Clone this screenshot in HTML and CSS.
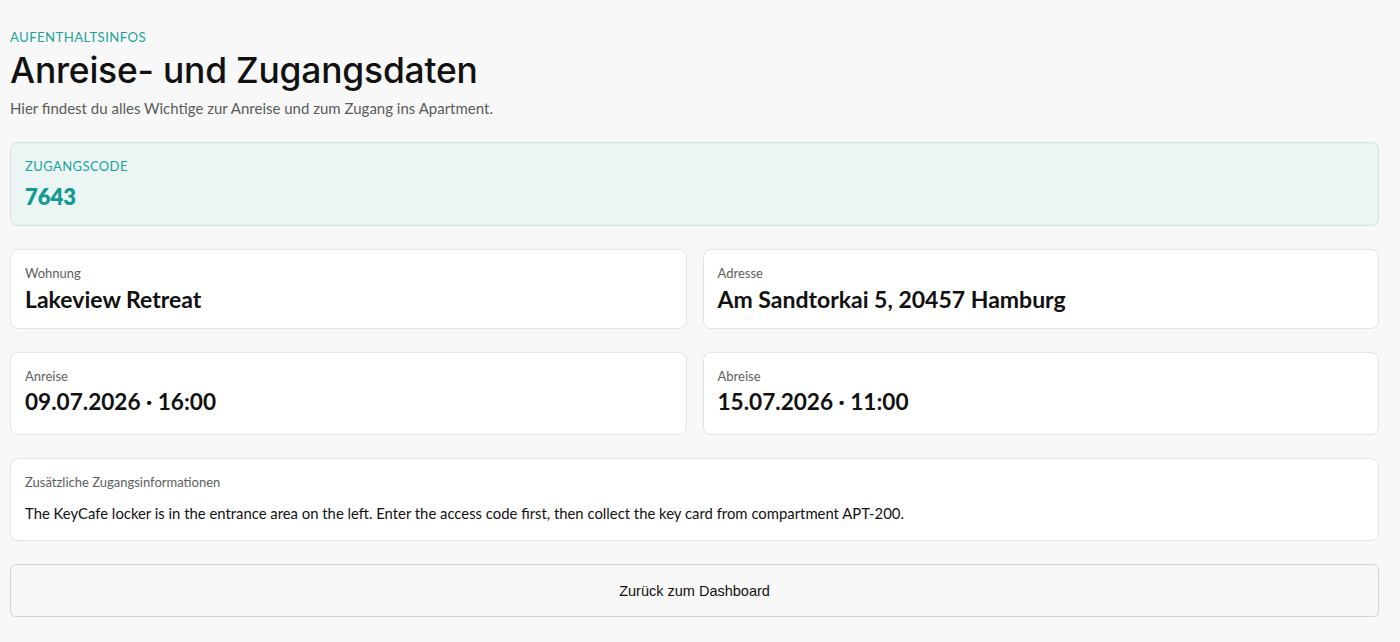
FILE: index.html
```html
<!DOCTYPE html>
<html lang="de">
<head>
<meta charset="utf-8">
<title>Anreise- und Zugangsdaten</title>
<link rel="stylesheet" href="styles.css">
</head>
<body>
<main class="page">
  <header class="head">
    <div class="eyebrow">AUFENTHALTSINFOS</div>
    <h1 class="title">Anreise- und Zugangsdaten</h1>
    <p class="subtitle">Hier findest du alles Wichtige zur Anreise und zum Zugang ins Apartment.</p>
  </header>

  <section class="code-card">
    <div class="code-label">ZUGANGSCODE</div>
    <div class="code-value">7643</div>
  </section>

  <section class="grid">
    <div class="card">
      <div class="label">Wohnung</div>
      <div class="value">Lakeview Retreat</div>
    </div>
    <div class="card">
      <div class="label">Adresse</div>
      <div class="value">Am Sandtorkai 5, 20457 Hamburg</div>
    </div>
  </section>

  <section class="grid">
    <div class="card card-tall">
      <div class="label">Anreise</div>
      <div class="value value-date">09.07.2026 · 16:00</div>
    </div>
    <div class="card card-tall">
      <div class="label">Abreise</div>
      <div class="value value-date">15.07.2026 · 11:00</div>
    </div>
  </section>

  <section class="card card-info">
    <div class="label">Zusätzliche Zugangsinformationen</div>
    <p class="info-text">The KeyCafe locker is in the entrance area on the left. Enter the access code first, then collect the key card from compartment APT-200.</p>
  </section>

  <button class="back-btn" type="button">Zurück zum Dashboard</button>
</main>
</body>
</html>
```

FILE: styles.css
```css
* { box-sizing: border-box; }

html, body {
  margin: 0;
  padding: 0;
  background: #f8f8f8;
}

body {
  font-family: "Lato", "Noto Sans", sans-serif;
  color: #111;
}

.page {
  width: 1369px;
  margin-left: 10px;
  padding-top: 29px;
  display: flex;
  flex-direction: column;
  gap: 23px;
}

.head {
  display: flex;
  flex-direction: column;
}

.eyebrow {
  font-size: 13.2px;
  line-height: 16px;
  letter-spacing: 0.4px;
  color: #1aa39c;
}

.title {
  margin: 6px 0 0;
  font-family: "Inter", "Noto Sans", sans-serif;
  font-weight: 500;
  font-size: 35.4px;
  line-height: 40px;
  letter-spacing: -0.2px;
  color: #111;
}

.subtitle {
  margin: 7px 0 0;
  font-size: 15px;
  line-height: 20px;
  color: #5b5b5b;
}

.code-card {
  margin-top: 1px;
  height: 84px;
  padding: 15px 14px 0;
  background: #ebf5f4;
  border: 1px solid #cde5e1;
  border-radius: 8px;
}

.code-label {
  font-size: 13px;
  line-height: 16px;
  letter-spacing: 0.4px;
  color: #1aa39c;
}

.code-value {
  margin-top: 9px;
  font-size: 22px;
  line-height: 28px;
  font-weight: 800;
  color: #139a93;
}

.grid {
  display: grid;
  grid-template-columns: 1fr 1fr;
  gap: 16px;
}

.card {
  background: #fff;
  border: 1px solid #e4e4e4;
  border-radius: 8px;
  padding: 15px 14px 0;
  height: 80px;
}

.card-tall { height: 83px; }

.label {
  font-size: 13px;
  line-height: 16px;
  color: #5e5e5e;
}

.value {
  margin-top: 4px;
  font-size: 23px;
  line-height: 28px;
  font-weight: 700;
  color: #111;
}

.value-date {
  font-size: 22.6px;
  margin-top: 4px;
}

.card-info { height: 83px; }

.info-text {
  margin: 13px 0 0;
  font-size: 14.85px;
  line-height: 20px;
  color: #111;
}

.back-btn {
  height: 53px;
  width: 100%;
  background: #f8f8f8;
  border: 1px solid #d6d6d6;
  border-radius: 6px;
  box-shadow: 0 1px 1px rgba(0,0,0,0.06);
  font-family: "Liberation Sans", Arial, sans-serif;
  font-size: 14.5px;
  color: #111;
}
```
